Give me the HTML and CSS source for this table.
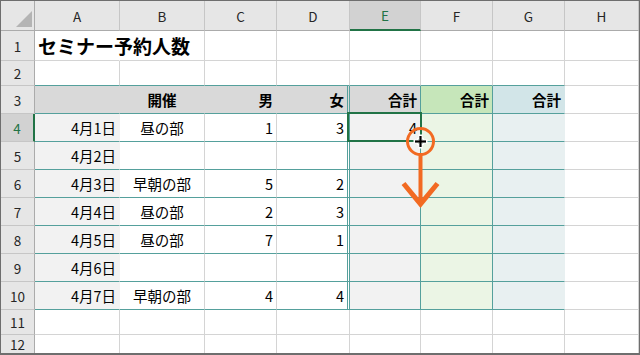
FILE: index.html
```html
<!DOCTYPE html>
<html lang="ja">
<head>
<meta charset="utf-8">
<link rel="stylesheet" href="styles.css">
</head>
<body>
<div class="sheet">
  <div class="c corner"><svg width="16" height="16" viewBox="0 0 16 16"><polygon points="16,0 16,16 0,16" fill="#b4b4b4"/></svg></div>
  <div class="c ch">A</div><div class="c ch">B</div><div class="c ch">C</div><div class="c ch">D</div><div class="c ch sel-ch">E</div><div class="c ch">F</div><div class="c ch">G</div><div class="c ch">H</div>

  <div class="c rh">1</div>
  <div class="c title nor">セミナー予約人数</div><div class="c"></div><div class="c"></div><div class="c"></div><div class="c"></div><div class="c"></div><div class="c"></div><div class="c"></div>

  <div class="c rh">2</div>
  <div class="c tb"></div><div class="c tb"></div><div class="c tb"></div><div class="c tb"></div><div class="c tb"></div><div class="c tb"></div><div class="c tb"></div><div class="c"></div>

  <div class="c rh">3</div>
  <div class="c tb hd nor"></div><div class="c tb hd nor m b">開催</div><div class="c tb hd nor r b">男</div><div class="c tb hd dbl r b">女</div><div class="c tb hd tr r b">合計</div><div class="c tb f3 tr r b">合計</div><div class="c tb g3 nor r b">合計</div><div class="c"></div>

  <div class="c rh sel-rh">4</div>
  <div class="c tb ga nor r">4月1日</div><div class="c tb m">昼の部</div><div class="c tb r">1</div><div class="c tb dbl r">3</div><div class="c tb ga tr r">4</div><div class="c tb fb tr"></div><div class="c tb gb nor"></div><div class="c"></div>

  <div class="c rh">5</div>
  <div class="c tb ga nor r">4月2日</div><div class="c tb m"></div><div class="c tb r"></div><div class="c tb dbl r"></div><div class="c tb ga tr r"></div><div class="c tb fb tr"></div><div class="c tb gb nor"></div><div class="c"></div>

  <div class="c rh">6</div>
  <div class="c tb ga nor r">4月3日</div><div class="c tb m">早朝の部</div><div class="c tb r">5</div><div class="c tb dbl r">2</div><div class="c tb ga tr r"></div><div class="c tb fb tr"></div><div class="c tb gb nor"></div><div class="c"></div>

  <div class="c rh">7</div>
  <div class="c tb ga nor r">4月4日</div><div class="c tb m">昼の部</div><div class="c tb r">2</div><div class="c tb dbl r">3</div><div class="c tb ga tr r"></div><div class="c tb fb tr"></div><div class="c tb gb nor"></div><div class="c"></div>

  <div class="c rh">8</div>
  <div class="c tb ga nor r">4月5日</div><div class="c tb m">昼の部</div><div class="c tb r">7</div><div class="c tb dbl r">1</div><div class="c tb ga tr r"></div><div class="c tb fb tr"></div><div class="c tb gb nor"></div><div class="c"></div>

  <div class="c rh">9</div>
  <div class="c tb ga nor r">4月6日</div><div class="c tb m"></div><div class="c tb r"></div><div class="c tb dbl r"></div><div class="c tb ga tr r"></div><div class="c tb fb tr"></div><div class="c tb gb nor"></div><div class="c"></div>

  <div class="c rh">10</div>
  <div class="c tb ga nor r">4月7日</div><div class="c tb m">早朝の部</div><div class="c tb r">4</div><div class="c tb dbl r">4</div><div class="c tb ga tr r"></div><div class="c tb fb tr"></div><div class="c tb gb nor"></div><div class="c"></div>

  <div class="c rh">11</div>
  <div class="c"></div><div class="c"></div><div class="c"></div><div class="c"></div><div class="c"></div><div class="c"></div><div class="c"></div><div class="c"></div>

  <div class="c rh">12</div>
  <div class="c"></div><div class="c"></div><div class="c"></div><div class="c"></div><div class="c"></div><div class="c"></div><div class="c"></div><div class="c"></div>

  <svg class="overlay" width="640" height="355" viewBox="0 0 640 355">
    <rect x="348" y="113" width="73" height="28" fill="none" stroke="#217346" stroke-width="2"/>
    <rect x="417.5" y="138.5" width="6" height="6" fill="#217346" stroke="#ffffff" stroke-width="1"/>
    <circle cx="420.5" cy="141.5" r="13" fill="none" stroke="#f26a22" stroke-width="3"/>
    <line x1="420.5" y1="155" x2="420.5" y2="203" stroke="#f26a22" stroke-width="4"/>
    <polyline points="403.5,183.5 420.5,204 437.5,183.5" fill="none" stroke="#f26a22" stroke-width="5" stroke-linejoin="miter" stroke-miterlimit="10"/>
    <g stroke="#ffffff" stroke-width="4" stroke-linecap="square">
      <line x1="415.5" y1="141.5" x2="425.5" y2="141.5"/>
      <line x1="420.5" y1="136.5" x2="420.5" y2="146.5"/>
    </g>
    <g stroke="#000000" stroke-width="2.2">
      <line x1="415" y1="141.5" x2="426" y2="141.5"/>
      <line x1="420.5" y1="136" x2="420.5" y2="147"/>
    </g>
  </svg>
</div>
</body>
</html>
```

FILE: styles.css
```css
* { box-sizing: border-box; }
html, body { margin: 0; padding: 0; background: #ffffff; }
body {
  font-family: "Noto Sans CJK JP", "Noto Sans", sans-serif;
  color: #000;
}
.sheet {
  position: relative;
  width: 640px;
  height: 355px;
  border: 1px solid #6e6e6e;
  border-bottom-width: 2px;
  overflow: hidden;
  display: grid;
  grid-template-columns: 34px 85px 85px 72px 73px 71px 72px 72px 1fr;
  grid-template-rows: 30px 30px 25px 28px 28px 28px 28px 28px 28px 28px 28px 25px 19px;
}
.c {
  display: flex;
  align-items: center;
  padding: 0 3px 0 4px;
  border-right: 1px solid #d4d4d4;
  border-bottom: 1px solid #d4d4d4;
  font-size: 14.5px;
  white-space: nowrap;
  min-width: 0;
}
.corner {
  background: #e6e6e6;
  border-right: 1px solid #ababab;
  border-bottom: 1px solid #ababab;
  justify-content: flex-end;
  align-items: flex-end;
  padding: 0 2px 3px 0;
}
.ch {
  background: #e6e6e6;
  border-right: 1px solid #c6c6c6;
  border-bottom: 1px solid #ababab;
  justify-content: center;
  font-size: 13.5px;
  color: #262626;
  padding: 0;
}
.sel-ch {
  background: #d2d2d2;
  color: #217346;
  border-bottom: 2px solid #217346;
}
.rh {
  background: #e6e6e6;
  border-right: 1px solid #ababab;
  border-bottom: 1px solid #c6c6c6;
  justify-content: center;
  font-size: 13.5px;
  color: #262626;
  padding: 0;
}
.sel-rh {
  background: #d2d2d2;
  color: #217346;
  border-right: 2px solid #217346;
}
.title {
  font-size: 19px;
  font-weight: bold;
  overflow: visible;
  padding-left: 3px;
}
.r { justify-content: flex-end; }
.m { justify-content: center; padding: 0; }
.b { font-weight: bold; }
.tb { border-bottom-color: #55a09c; }
.tr { border-right-color: #55a09c; }
.nor { border-right-color: transparent; }
.dbl { border-right: 3px double #55a09c; }
.hd { background: #d9d9d9; }
.ga { background: #f2f2f2; }
.f3 { background: #c6e6ba; }
.g3 { background: #d2e5e8; }
.fb { background: #ebf5e5; }
.gb { background: #e8f0f1; }
.overlay {
  position: absolute;
  left: -1px;
  top: -1px;
  pointer-events: none;
}
```
